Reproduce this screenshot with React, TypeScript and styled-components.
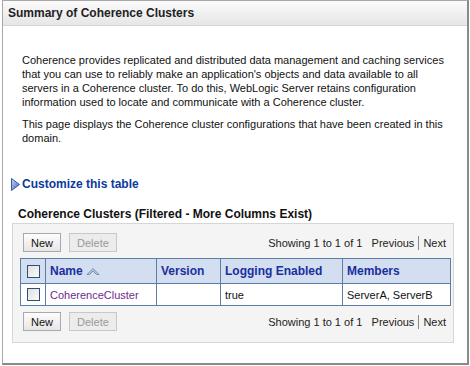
import React from "react";
import styled, { createGlobalStyle } from "styled-components";

const Global = createGlobalStyle`
  html, body { margin: 0; padding: 0; background: #ffffff; }
  body { font-family: "Liberation Sans", Arial, sans-serif; font-size: 11px; color: #000; }
`;

const Frame = styled.div`
  margin: 0 0 0 2px;
  width: 464px;
  height: 362px;
  border: 1px solid #a8a8a8;
  border-right: 2px solid #8a8a8a;
  border-bottom: 2px solid #8a8a8a;
  background: #fff;
  display: flex;
  flex-direction: column;
`;

const Header = styled.div`
  height: 24px;
  background: linear-gradient(#fbfbfb, #e6e6e6);
  border-bottom: 1px solid #d4d4d4;
  display: flex;
  align-items: center;
  padding-left: 5px;
  font-weight: bold;
  font-size: 12px;
  color: #222;
`;

const Body = styled.div`
  padding: 27px 10px 0 19px;
`;

const Para = styled.p`
  margin: 0 0 8px 0;
  line-height: 14px;
  width: 430px;
  color: #111;
`;

const CustomizeRow = styled.div`
  display: flex;
  align-items: center;
  gap: 2px;
  margin: 32px 0 0 -11px;
  font-weight: bold;
  font-size: 12px;
  color: #0b3a9c;
`;

const TableTitle = styled.div`
  margin: 16px 0 0 -4px;
  font-weight: bold;
  font-size: 12px;
  color: #111;
`;

const Panel = styled.div`
  margin: 2px 0 0 -10px;
  width: 442px;
  height: 120px;
  border: 1px solid #d6d6d6;
  background: #f4f4f4;
  padding: 9px 7px 0 7px;
  box-sizing: border-box;
`;

const Toolbar = styled.div`
  display: flex;
  align-items: center;
  justify-content: space-between;
  height: 19px;
  padding: 0 0 0 3px;
`;

const Buttons = styled.div`
  display: flex;
  gap: 8px;
`;

const Button = styled.div<{ $disabled?: boolean }>`
  height: 17px;
  padding: 0 7px;
  display: flex;
  align-items: center;
  border: 1px solid ${(p) => (p.$disabled ? "#c8c8c8" : "#a9a9a9")};
  background: ${(p) => (p.$disabled ? "#ececec" : "linear-gradient(#fdfdfd, #e6e6e6)")};
  color: ${(p) => (p.$disabled ? "#9a9a9a" : "#111")};
  font-size: 11px;
`;

const Pager = styled.div`
  display: flex;
  align-items: center;
  color: #222;
  font-size: 11px;
  padding-right: 0;
`;

const Sep = styled.span`
  display: inline-block;
  width: 1px;
  height: 14px;
  background: #888;
  margin: 0 4px;
`;

const Table = styled.table`
  border-collapse: collapse;
  margin: 6px 0 6px 0;
  width: 431px;
  background: #fff;
`;

const Th = styled.th<{ $w?: number }>`
  width: ${(p) => (p.$w ? `${p.$w}px` : "auto")};
  height: 25px;
  background: #d3def0;
  border: 1px solid #5b7ea3;
  text-align: left;
  padding: 0 4px;
  font-size: 12px;
  font-weight: bold;
  color: #1a2f9e;
  box-sizing: border-box;
`;

const Td = styled.td`
  height: 22px;
  border: 1px solid #5b7ea3;
  padding: 0 4px;
  font-size: 11px;
  color: #111;
  box-sizing: border-box;
`;

const LinkText = styled.span`
  color: #6e2a8e;
`;

const Check = styled.div`
  width: 11px;
  height: 11px;
  border: 1px solid #2f4f7a;
  background: linear-gradient(135deg, #e0e0e0, #fbfbfb);
  margin: 0 auto;
`;

const CheckCell = styled(Td)`
  padding: 0;
  text-align: center;
`;

const CheckTh = styled(Th)`
  padding: 0;
`;

function ToolRow() {
  return (
    <Toolbar>
      <Buttons>
        <Button>New</Button>
        <Button $disabled>Delete</Button>
      </Buttons>
      <Pager>
        Showing 1 to 1 of 1&nbsp;&nbsp;&nbsp;Previous<Sep />Next
      </Pager>
    </Toolbar>
  );
}

export default function App() {
  return (
    <>
      <Global />
      <Frame>
        <Header>Summary of Coherence Clusters</Header>
        <Body>
          <Para>
            Coherence provides replicated and distributed data management and caching services
            that you can use to reliably make an application's objects and data available to all
            servers in a Coherence cluster. To do this, WebLogic Server retains configuration
            information used to locate and communicate with a Coherence cluster.
          </Para>
          <Para>
            This page displays the Coherence cluster configurations that have been created in this
            domain.
          </Para>
          <CustomizeRow>
            <svg width="9" height="13" viewBox="0 0 9 13">
              <defs>
                <linearGradient id="tri" x1="0" y1="0" x2="1" y2="1">
                  <stop offset="0" stopColor="#c9d6f2" />
                  <stop offset="1" stopColor="#3a62c0" />
                </linearGradient>
              </defs>
              <path d="M0.5 0.5 L8.5 6.5 L0.5 12.5 Z" fill="url(#tri)" stroke="#3a5aa8" strokeWidth="1" />
            </svg>
            Customize this table
          </CustomizeRow>
          <TableTitle>Coherence Clusters (Filtered - More Columns Exist)</TableTitle>
          <Panel>
            <ToolRow />
            <Table>
              <thead>
                <tr>
                  <CheckTh $w={25}>
                    <Check />
                  </CheckTh>
                  <Th $w={111}>
                    Name{" "}
                    <svg width="14" height="9" viewBox="0 0 14 9" style={{ verticalAlign: "middle" }}>
                      <path d="M1 7.5 L7 1.5 L13 7.5 L10.5 7.5 L7 4 L3.5 7.5 Z" fill="#b9c6de" stroke="#7c8fb3" strokeWidth="1" strokeLinejoin="round" />
                    </svg>
                  </Th>
                  <Th $w={64}>Version</Th>
                  <Th $w={122}>Logging Enabled</Th>
                  <Th>Members</Th>
                </tr>
              </thead>
              <tbody>
                <tr>
                  <CheckCell>
                    <Check />
                  </CheckCell>
                  <Td>
                    <LinkText>CoherenceCluster</LinkText>
                  </Td>
                  <Td></Td>
                  <Td>true</Td>
                  <Td>ServerA, ServerB</Td>
                </tr>
              </tbody>
            </Table>
            <ToolRow />
          </Panel>
        </Body>
      </Frame>
    </>
  );
}
